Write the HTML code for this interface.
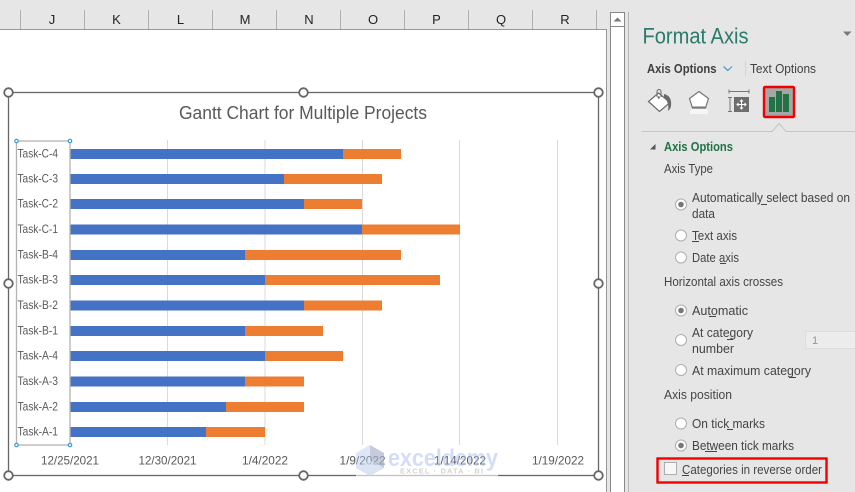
<!DOCTYPE html>
<html><head><meta charset="utf-8"><title>Format Axis</title>
<style>
html,body{margin:0;padding:0;background:#e6e6e6;width:855px;height:492px;overflow:hidden}
svg{display:block}
text{font-family:"Liberation Sans",sans-serif}
.c{font-size:13px;fill:#222;text-anchor:middle}
.l{font-size:12px;fill:#595959}
.d{font-size:12px;fill:#595959}
.p{font-size:13px;fill:#444}
</style></head><body>
<svg width="855" height="492" viewBox="0 0 855 492" xmlns="http://www.w3.org/2000/svg">
<rect width="855" height="492" fill="#e6e6e6"/>
<!-- sheet -->
<rect x="0" y="30" width="606" height="462" fill="#fff"/>
<path d="M0 29.500H606.500V492" fill="none" stroke="#999" stroke-width="1"/>
<g stroke="#b0b0b0" stroke-width="1"><path d="M20.500 10V29M84.500 10V29M148.500 10V29M212.500 10V29M276.500 10V29M340.500 10V29M404.500 10V29M468.500 10V29M532.500 10V29M596.500 10V29"/></g>
<text class="c" x="52" y="24">J</text><text class="c" x="116.500" y="24">K</text><text class="c" x="180.500" y="24">L</text><text class="c" x="245" y="24">M</text><text class="c" x="309" y="24">N</text><text class="c" x="373" y="24">O</text><text class="c" x="436.500" y="24">P</text><text class="c" x="501" y="24">Q</text><text class="c" x="565" y="24">R</text>
<!-- scrollbar -->
<rect x="610.500" y="12.500" width="14" height="480" fill="#fff" stroke="#888"/>
<path d="M611 26.500H624" stroke="#888"/>
<path d="M613.500 21.500L617.500 17.500L621.500 21.500Z" fill="#777"/>
<path d="M628.500 12V492" stroke="#b5b5b5"/>
<!-- gridlines -->
<g stroke="#d9d9d9" stroke-width="1"><path d="M167.500 140V445M265 140V445M362.500 140V445M459.500 140V445M557.500 140V445"/></g>
<!-- chart border -->
<rect x="8.500" y="92.500" width="590" height="383" fill="none" stroke="#666" stroke-width="1.300"/>
<text x="303" y="119" text-anchor="middle" font-size="18.500" fill="#595959" textLength="248" lengthAdjust="spacingAndGlyphs">Gantt Chart for Multiple Projects</text>
<!-- bars -->
<g fill="#4472c4">
<rect x="70" y="149" width="273" height="10"/><rect x="70" y="174" width="214" height="10"/><rect x="70" y="199" width="234" height="10"/><rect x="70" y="224.500" width="292" height="10"/><rect x="70" y="250" width="175" height="10"/><rect x="70" y="275" width="195" height="10"/><rect x="70" y="300.500" width="234" height="10"/><rect x="70" y="326" width="175" height="10"/><rect x="70" y="351" width="195" height="10"/><rect x="70" y="376.500" width="175" height="10"/><rect x="70" y="402" width="156" height="10"/><rect x="70" y="427" width="136" height="10"/>
</g>
<g fill="#ed7d31">
<rect x="343" y="149" width="58" height="10"/><rect x="284" y="174" width="98" height="10"/><rect x="304" y="199" width="58" height="10"/><rect x="362" y="224.500" width="98" height="10"/><rect x="245" y="250" width="156" height="10"/><rect x="265" y="275" width="175" height="10"/><rect x="304" y="300.500" width="78" height="10"/><rect x="245" y="326" width="78" height="10"/><rect x="265" y="351" width="78" height="10"/><rect x="245" y="376.500" width="59" height="10"/><rect x="226" y="402" width="78" height="10"/><rect x="206" y="427" width="59" height="10"/>
</g>
<!-- axis selection -->
<rect x="16.500" y="141" width="53.500" height="304" fill="none" stroke="#b3b3b3" stroke-width="1.300"/>
<g fill="#fff" stroke="#2e9be6" stroke-width="1.200"><circle cx="16.500" cy="141" r="1.700"/><circle cx="70" cy="141" r="1.700"/><circle cx="16.500" cy="445" r="1.700"/><circle cx="70" cy="445" r="1.700"/></g>
<text class="l" x="17.500" y="157.500" textLength="40.500" lengthAdjust="spacingAndGlyphs">Task-C-4</text>
<text class="l" x="17.500" y="182.500" textLength="40.500" lengthAdjust="spacingAndGlyphs">Task-C-3</text>
<text class="l" x="17.500" y="207.500" textLength="40.500" lengthAdjust="spacingAndGlyphs">Task-C-2</text>
<text class="l" x="17.500" y="233" textLength="40.500" lengthAdjust="spacingAndGlyphs">Task-C-1</text>
<text class="l" x="17.500" y="258.500" textLength="40.500" lengthAdjust="spacingAndGlyphs">Task-B-4</text>
<text class="l" x="17.500" y="283.500" textLength="40.500" lengthAdjust="spacingAndGlyphs">Task-B-3</text>
<text class="l" x="17.500" y="309" textLength="40.500" lengthAdjust="spacingAndGlyphs">Task-B-2</text>
<text class="l" x="17.500" y="334.500" textLength="40.500" lengthAdjust="spacingAndGlyphs">Task-B-1</text>
<text class="l" x="17.500" y="359.500" textLength="40.500" lengthAdjust="spacingAndGlyphs">Task-A-4</text>
<text class="l" x="17.500" y="385" textLength="40.500" lengthAdjust="spacingAndGlyphs">Task-A-3</text>
<text class="l" x="17.500" y="410.500" textLength="40.500" lengthAdjust="spacingAndGlyphs">Task-A-2</text>
<text class="l" x="17.500" y="435.500" textLength="40.500" lengthAdjust="spacingAndGlyphs">Task-A-1</text>
<!-- dates -->
<text class="d" x="41" y="464.500" textLength="58" lengthAdjust="spacingAndGlyphs">12/25/2021</text>
<text class="d" x="138.500" y="464.500" textLength="58" lengthAdjust="spacingAndGlyphs">12/30/2021</text>
<text class="d" x="242" y="464.500" textLength="46" lengthAdjust="spacingAndGlyphs">1/4/2022</text>
<text class="d" x="339.500" y="464.500" textLength="46" lengthAdjust="spacingAndGlyphs">1/9/2022</text>
<text class="d" x="434" y="464.500" textLength="52" lengthAdjust="spacingAndGlyphs">1/14/2022</text>
<text class="d" x="532" y="464.500" textLength="52" lengthAdjust="spacingAndGlyphs">1/19/2022</text>
<!-- watermark -->
<rect x="356" y="472" width="142" height="5" fill="#fff" opacity=".6"/>
<path d="M370 445L384 453V468L370 476L356 468V453Z" fill="#b8c8ee" opacity=".45"/>
<path d="M370 445L384 453V468L370 460Z" fill="#9aa3b5" opacity=".4"/>
<path d="M356 468L370 460L384 468L370 476Z" fill="#d5e2f0" opacity=".5"/>
<text x="388" y="466" font-size="24" font-weight="700" fill="#a9bdf0" opacity=".5" textLength="110" lengthAdjust="spacingAndGlyphs">exceldemy</text>
<text x="400" y="473.500" font-size="7.500" font-weight="700" fill="#b5b5b5" opacity=".6" textLength="83">EXCEL · DATA · BI</text>
<!-- handles -->
<g fill="#fff" stroke="#666" stroke-width="1.800">
<circle cx="8.500" cy="92.500" r="4.300"/><circle cx="303.500" cy="92.500" r="4.300"/><circle cx="598.500" cy="92.500" r="4.300"/>
<circle cx="8.500" cy="283.500" r="4.300"/><circle cx="598.500" cy="283.500" r="4.300"/>
<circle cx="8.500" cy="475.500" r="4.300"/><circle cx="303.500" cy="475.500" r="4.300"/><circle cx="598.500" cy="475.500" r="4.300"/>
</g>
<!-- panel head -->
<text x="642.500" y="43.500" font-size="22" fill="#2b7a6b" textLength="106" lengthAdjust="spacingAndGlyphs">Format Axis</text>
<path d="M843 31.500H851.500L847.200 36Z" fill="#7a7a7a"/>
<text x="647" y="73" font-size="13" font-weight="700" fill="#404040" textLength="69.500" lengthAdjust="spacingAndGlyphs">Axis Options</text>
<path d="M723.500 66.500L727.800 70.500L732 66.500" fill="none" stroke="#4a9bd4" stroke-width="1.200"/>
<path d="M745.500 61V76" stroke="#d4d4d4"/>
<text x="750" y="73" font-size="13" fill="#404040" textLength="66" lengthAdjust="spacingAndGlyphs">Text Options</text>
<!-- fill icon -->
<path d="M658.500 93L670 102.500L659.500 111.500L648.500 101.500Z" fill="#fff" stroke="#6a6a6a" stroke-width="1.200"/>
<path d="M657 97V91.500A2 2 0 0 1 661 91.500V97" fill="none" stroke="#6a6a6a" stroke-width="1"/>
<circle cx="658.800" cy="97.500" r="1.200" fill="#6a6a6a"/>
<path d="M664 94C669 95 672 99 671 106C670.500 109 669 110 668 111C669 106 668 101 664 97Z" fill="#6a6a6a"/>
<!-- shape icon -->
<path d="M699 91.500L708.500 98.500L705.500 108H692.500L689.500 98.500Z" fill="#fff" stroke="#777" stroke-width="1.200"/>
<path d="M692 107.500H706" stroke="#777" stroke-width="2"/>
<path d="M690 111L692 109H706L708 111V114H690Z" fill="#f6f6f6"/>
<!-- size icon -->
<path d="M729 91.500H749M729 89.500V93.500M749 89.500V93.500" fill="none" stroke="#777" stroke-width="1"/>
<path d="M730 97.500V111.500M728 97.500H732M728 111.500H732" fill="none" stroke="#777" stroke-width="1"/>
<rect x="734" y="97" width="15" height="15" fill="#6d6d6d"/>
<path d="M741.500 100V109M737 104.500H746M740 101.500L741.500 100L743 101.500M740 107.500L741.500 109L743 107.500M738.500 103L737 104.500L738.500 106M744.500 103L746 104.500L744.500 106" fill="none" stroke="#fff" stroke-width="1"/>
<!-- chart icon -->
<rect x="764" y="87" width="30" height="30" fill="#a6a6a6" stroke="#f00000" stroke-width="2.400" rx="1"/>
<g fill="#217346"><rect x="769" y="97" width="6" height="15"/><rect x="776" y="91" width="6" height="21"/><rect x="783" y="94" width="6" height="18"/></g>
<!-- separator -->
<path d="M642 131.500H772L779 123.500L786 131.500H855" fill="none" stroke="#c4c4c4"/>
<path d="M650 149.500H655.500V144Z" fill="#555"/>
<text x="664" y="151" font-size="13" font-weight="700" fill="#217346" textLength="69" lengthAdjust="spacingAndGlyphs">Axis Options</text>
<text class="p" x="664" y="173" textLength="49" lengthAdjust="spacingAndGlyphs">Axis Type</text>
<text class="p" x="692" y="202" textLength="158" lengthAdjust="spacingAndGlyphs">Automatically select based on</text>
<text class="p" x="692" y="218" textLength="23" lengthAdjust="spacingAndGlyphs">data</text>
<text class="p" x="692" y="240" textLength="45" lengthAdjust="spacingAndGlyphs">Text axis</text>
<text class="p" x="692" y="262" textLength="47" lengthAdjust="spacingAndGlyphs">Date axis</text>
<text class="p" x="664" y="286" textLength="119" lengthAdjust="spacingAndGlyphs">Horizontal axis crosses</text>
<text class="p" x="692" y="315" textLength="56" lengthAdjust="spacingAndGlyphs">Automatic</text>
<text class="p" x="692" y="337" textLength="61" lengthAdjust="spacingAndGlyphs">At category</text>
<text class="p" x="692" y="353" textLength="42" lengthAdjust="spacingAndGlyphs">number</text>
<text class="p" x="692" y="375" textLength="119" lengthAdjust="spacingAndGlyphs">At maximum category</text>
<text class="p" x="664" y="399" textLength="68" lengthAdjust="spacingAndGlyphs">Axis position</text>
<text class="p" x="692" y="428" textLength="73" lengthAdjust="spacingAndGlyphs">On tick marks</text>
<text class="p" x="692" y="450" textLength="102" lengthAdjust="spacingAndGlyphs">Between tick marks</text>
<text class="p" x="682" y="474" textLength="140" lengthAdjust="spacingAndGlyphs">Categories in reverse order</text>
<!-- mnemonic underlines -->
<g stroke="#444" stroke-width="1"><path d="M761 204.500H767M692 241.500H699M720 263.500H726M709 316.500H716M727 339.500H733M789 377.500H796M727 429.500H733M705 451.500H717M682 475.500H689"/></g>
<!-- radios -->
<g fill="#fff" stroke="#adadad" stroke-width="1">
<circle cx="681" cy="204.500" r="5.500"/><circle cx="681" cy="235.500" r="5.500"/><circle cx="681" cy="257.500" r="5.500"/><circle cx="681" cy="310.500" r="5.500"/><circle cx="681" cy="340" r="5.500"/><circle cx="681" cy="370" r="5.500"/><circle cx="681" cy="423.500" r="5.500"/><circle cx="681" cy="445.500" r="5.500"/>
</g>
<g fill="#777"><circle cx="681" cy="204.500" r="2.800"/><circle cx="681" cy="310.500" r="2.800"/><circle cx="681" cy="445.500" r="2.800"/></g>
<!-- input -->
<rect x="805.500" y="331.500" width="52" height="17" fill="#ececec" stroke="#dcdcdc"/>
<text x="812" y="344" font-size="11" fill="#7f9f8c">1</text>
<!-- reverse order box -->
<rect x="657.500" y="458.500" width="169" height="24" fill="none" stroke="#f00000" stroke-width="2.400"/>
<rect x="664.500" y="462.500" width="12" height="12" fill="#f7f7f7" stroke="#adadad"/>
</svg>
</body></html>
